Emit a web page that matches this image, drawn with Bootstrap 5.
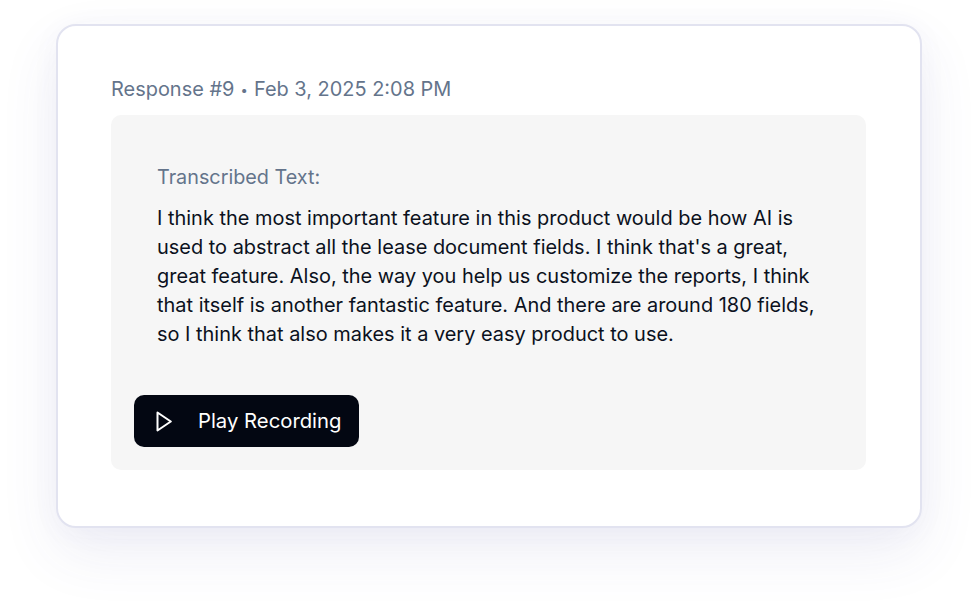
<!DOCTYPE html>
<html lang="en">
<head>
<meta charset="utf-8">
<title>Response</title>
<link href="https://cdn.jsdelivr.net/npm/bootstrap@5.3.0/dist/css/bootstrap.min.css" rel="stylesheet">
<style>
html, body { height: 616px; overflow: hidden; background: #fff; }
body { font-family: Inter, "Liberation Sans", sans-serif; padding: 24px 56px 0; }
.resp-shell { height: 504px; padding: 51px 54px 55px 53px; background: #fff; border: 2px solid #e2e3f0; border-radius: 20px; box-shadow: 0 24px 60px rgba(70,70,150,.09), 0 4px 30px rgba(70,70,150,.04); }
.resp-meta { font-size: 19.95px; line-height: 24px; color: #64748b; margin-bottom: 13px; }
.resp-dot { font-size: 13px; vertical-align: 1px; margin: 0 .5px; }
.resp-panel { background: #f6f6f6; border-radius: 10px; height: 355px; padding: 50px 23px 23px; }
.resp-label { font-size: 19.8px; line-height: 24px; color: #64748b; margin: 0 0 15px 23px; }
.resp-body { font-size: 19.97px; line-height: 29px; color: #0b1120; margin: 0 23px 46px; }
.resp-play { background: #030712; color: #fff; border: 0; border-radius: 10px; height: 52px; width: 225px; padding: 0 0 0 22px; font-size: 20.3px; gap: 26px; }
.resp-play:hover { background: #030712; color: #fff; }
</style>
</head>
<body>
<div class="resp-shell">
  <div class="resp-meta">Response #9 <span class="resp-dot">•</span> Feb 3, 2025 2:08 PM</div>
  <div class="resp-panel">
    <p class="resp-label">Transcribed Text:</p>
    <p class="resp-body">I think the most important feature in this product would be how AI is used to abstract all the lease document fields. I think that's a great, great feature. Also, the way you help us customize the reports, I think that itself is another fantastic feature. And there are around 180 fields, so I think that also makes it a very easy product to use.</p>
    <button type="button" class="btn resp-play d-inline-flex align-items-center">
      <svg width="16" height="21" viewBox="0 0 16 21" fill="none" stroke="#fff" stroke-width="2" stroke-linejoin="round" aria-hidden="true"><path d="M1.5 1.5 14.8 10.5 1.5 19.5Z"/></svg>
      <span>Play Recording</span>
    </button>
  </div>
</div>
<script src="https://cdn.jsdelivr.net/npm/bootstrap@5.3.0/dist/js/bootstrap.bundle.min.js"></script>
</body>
</html>
